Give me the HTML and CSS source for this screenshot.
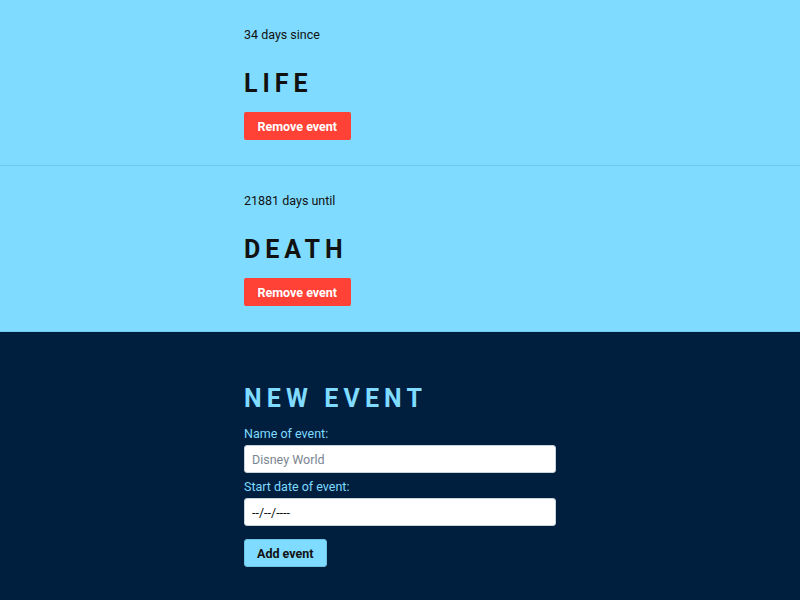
FILE: index.html
```html
<!DOCTYPE html>
<html lang="en">
<head>
<meta charset="utf-8">
<title>Days since / until</title>
<link rel="stylesheet" href="styles.css">
</head>
<body>
<main class="events">
  <section class="event">
    <div class="wrap">
      <p class="count">34 days since</p>
      <h2 class="event-name">LIFE</h2>
      <button class="btn btn-remove" type="button">Remove event</button>
    </div>
  </section>
  <section class="event">
    <div class="wrap">
      <p class="count">21881 days until</p>
      <h2 class="event-name">DEATH</h2>
      <button class="btn btn-remove" type="button">Remove event</button>
    </div>
  </section>
</main>
<section class="new-event">
  <form class="wrap form">
    <h2 class="form-title">NEW EVENT</h2>
    <label class="field">
      <span class="label">Name of event:</span>
      <input class="input" type="text" placeholder="Disney World">
    </label>
    <label class="field">
      <span class="label">Start date of event:</span>
      <input class="input input-date" type="text" inputmode="numeric" placeholder="--/--/----">
    </label>
    <button class="btn btn-add" type="button">Add event</button>
  </form>
</section>
</body>
</html>
```
FILE: styles.css
```css
* { box-sizing: border-box; }
html, body { margin: 0; padding: 0; }
body {
  font-family: Roboto, "Liberation Sans", sans-serif;
  background: #001f3f;
  color: #111111;
  min-height: 600px;
}
.wrap {
  width: 312px;
  margin: 0 auto;
}
.event {
  background: #7fdbff;
  border-bottom: 1px solid #72c9ec;
  padding: 27px 0 25px;
}
.count {
  margin: 0;
  font-size: 12.5px;
  line-height: 15px;
}
.event-name {
  margin: 27px 0 13px;
  font-size: 25px;
  line-height: 30px;
  font-weight: 700;
  letter-spacing: 0.2em;
}
.btn {
  display: block;
  border: 0;
  border-radius: 2px;
  height: 28px;
  padding: 0 13.5px;
  font-family: inherit;
  font-size: 12.5px;
  font-weight: 700;
  cursor: pointer;
}
.btn-remove {
  background: #ff4136;
  color: #ffffff;
}
.new-event {
  background: #001f3f;
  padding: 52px 0 33px;
}
.form-title {
  margin: 0 0 12px;
  color: #7fdbff;
  font-size: 25px;
  line-height: 30px;
  font-weight: 700;
  letter-spacing: 0.205em;
}
.field {
  display: flex;
  flex-direction: column;
  gap: 4px;
  margin-bottom: 6px;
}
.label {
  color: #7fdbff;
  font-size: 12.5px;
  line-height: 15px;
}
.input {
  width: 100%;
  height: 28px;
  border: 1px solid #c9d3dc;
  border-radius: 3px;
  background: #ffffff;
  padding: 0 7px;
  font-family: inherit;
  font-size: 12.5px;
  color: #111111;
}
.input::placeholder { color: #7a8591; }
.input-date::placeholder { color: #111111; }
.btn-add {
  margin-top: 13px;
  padding: 0 12px;
  background: #7fdbff;
  color: #111111;
  border: 1px solid #6ac4e6;
  border-radius: 3px;
}
```
